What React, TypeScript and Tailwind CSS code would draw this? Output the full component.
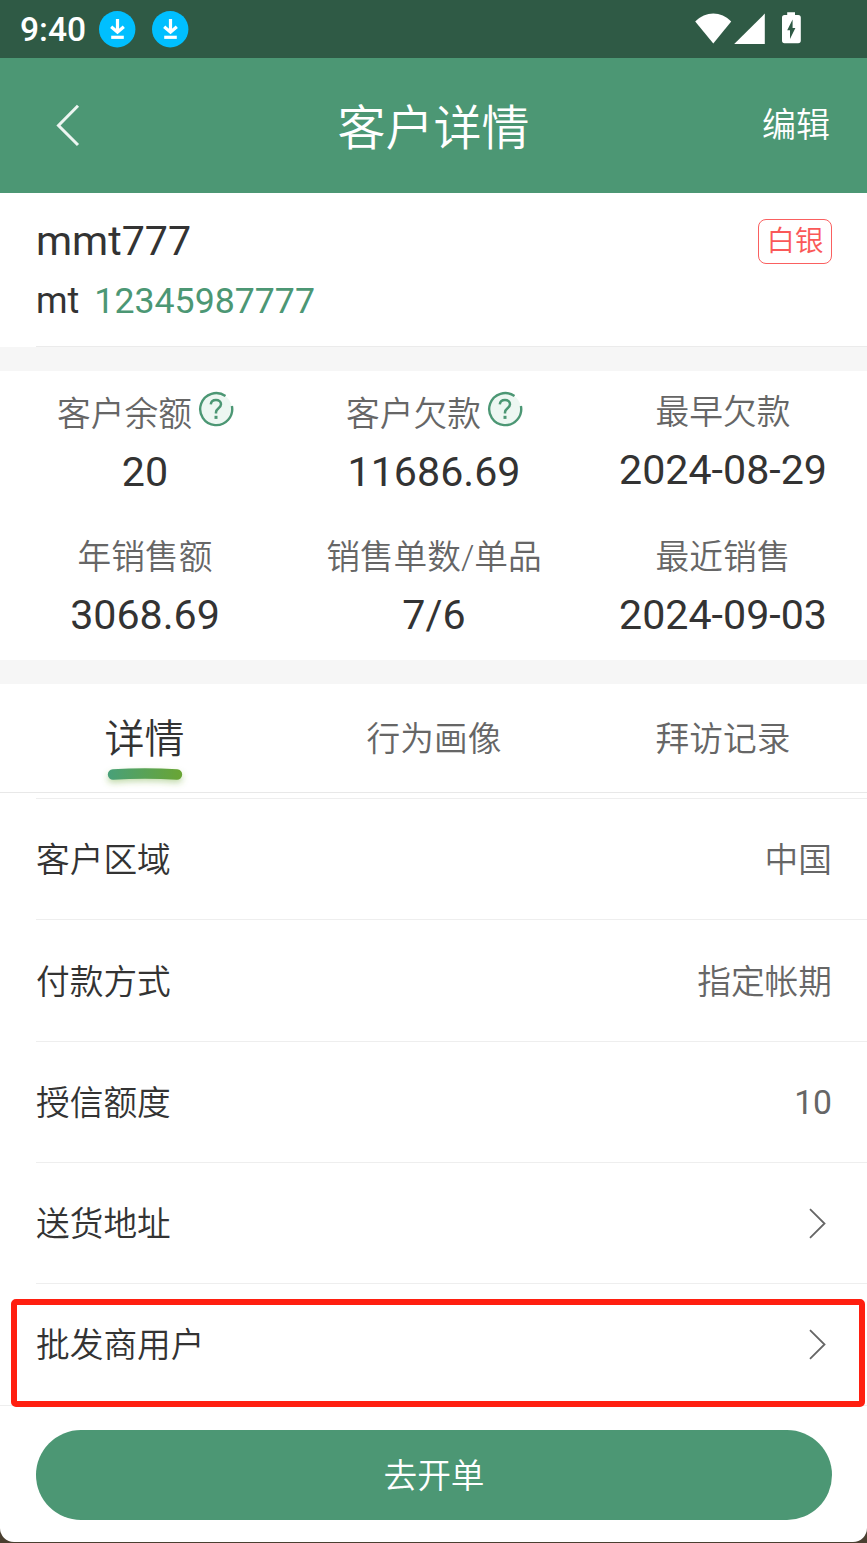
import { ReactNode } from "react"

interface Stat {
    label: string
    value: string
    help?: boolean
}

interface Row {
    label: string
    value?: string
}

const stats: Stat[] = [
    { label: "客户余额", value: "20", help: true },
    { label: "客户欠款", value: "11686.69", help: true },
    { label: "最早欠款", value: "2024-08-29" },
    { label: "年销售额", value: "3068.69" },
    { label: "销售单数/单品", value: "7/6" },
    { label: "最近销售", value: "2024-09-03" },
]

const rows: Row[] = [
    { label: "客户区域", value: "中国" },
    { label: "付款方式", value: "指定帐期" },
    { label: "授信额度", value: "10" },
    { label: "送货地址" },
    { label: "批发商用户" },
]

function DownloadIcon() {
    return (
        <svg width="37" height="37" viewBox="0 0 37 37" fill="none">
            <circle cx="18.2" cy="18.2" r="18.2" fill="#00bfff" />
            <path d="M18.5 8V20.5M12.2 15.7L18.5 21.2L24.8 15.7" stroke="#fff" strokeWidth="3.2" />
            <path d="M12.2 26.3H24.8" stroke="#fff" strokeWidth="3.2" />
        </svg>
    )
}

function HelpIcon() {
    return (
        <svg className="shrink-0" width="36" height="36" viewBox="0 0 36 36" fill="none">
            <circle cx="18" cy="18" r="16" fill="#edf7f2" />
            <path d="M27.5 5.1A16 16 0 1 0 33.9 15" stroke="#4c9774" strokeWidth="2.4" />
            <path
                d="M12.8 13.4C13 10.6 15.2 9 18 9C20.9 9 23 10.7 23 13.2C23 15.2 21.9 16.2 20.3 17.4C18.8 18.6 18 19.4 18 21.2V22.6"
                stroke="#4c9774"
                strokeWidth="2.5"
            />
            <path d="M18 24.8V27.9" stroke="#4c9774" strokeWidth="3" />
        </svg>
    )
}

function ChevronRight() {
    return (
        <svg width="24" height="32" viewBox="0 0 24 32" fill="none">
            <path d="M2 2.2L16.5 16.5L2 30.8" stroke="#666" strokeWidth="1.8" />
        </svg>
    )
}

function StatusBar() {
    return (
        <div className="flex h-[58px] items-center bg-[#2f5a45] pl-5 text-white">
            <span className="w-[79px] pt-0.5 text-[33.6px] leading-none font-medium">9:40</span>
            <div className="flex gap-4">
                <DownloadIcon />
                <DownloadIcon />
            </div>
            <svg className="mr-[65px] ml-auto" width="108" height="36" viewBox="0 0 108 36" fill="#fff">
                <path d="M1.2 10.6C11.5 -.1 27.2 -.1 37.2 10.6L19.3 32.5Z" />
                <path d="M70.8 2.6V33H40.2Z" />
                <path
                    fillRule="evenodd"
                    d="M93.2 1.2H101V4H104.2Q106.8 4 106.8 6.6V29.6Q106.8 32.2 104.2 32.2H90.5Q88 32.2 88 29.6V6.6Q88 4 90.5 4H93.2ZM98.6 8.6L93.2 19.3H96V28L101.4 17H98.6Z"
                />
            </svg>
        </div>
    )
}

function Header() {
    return (
        <header className="grid h-[135px] grid-cols-3 items-center bg-[#4c9774] text-white">
            <svg className="mb-0.5 ml-[55px]" width="26" height="44" viewBox="0 0 26 44" fill="none">
                <path d="M23 2.8L3.5 22.5L23 42" stroke="#edf5f1" strokeWidth="3" />
            </svg>
            <h1 className="pt-1.5 text-center text-[48px] leading-none font-[350]">客户详情</h1>
            <button type="button" className="pr-[37px] pb-px text-right text-[34px] leading-none font-[350]">编辑</button>
        </header>
    )
}

function Tab({ active, children }: { active?: boolean; children: ReactNode }) {
    return (
        <div className={active ? "relative flex items-center justify-center pt-1 text-[40px] font-[350] text-[#333]" : "flex items-center justify-center pt-1 pl-px text-[33.7px] font-[350] text-[#666]"}>
            <span>{children}</span>
            {active && (
                <svg className="absolute top-[76px] left-1/2 -translate-x-1/2" width="96" height="32" viewBox="0 0 96 32" fill="none">
                    <defs>
                        <linearGradient id="underline" x1="10" y1="0" x2="86" y2="0" gradientUnits="userSpaceOnUse">
                            <stop stopColor="#48a07a" />
                            <stop offset="1" stopColor="#6aa533" />
                        </linearGradient>
                        <filter id="glow" x="0" y="0" width="96" height="32" filterUnits="userSpaceOnUse">
                            <feGaussianBlur stdDeviation="3" />
                        </filter>
                    </defs>
                    <path d="M15.5 18Q48 15 80.5 18" stroke="#6aa533" strokeOpacity="0.4" strokeWidth="10" strokeLinecap="round" filter="url(#glow)" />
                    <path d="M16 14.5Q48 12.5 80 14.5" stroke="url(#underline)" strokeWidth="10.4" strokeLinecap="round" />
                </svg>
            )}
        </div>
    )
}

export default function App() {
    return (
        <div className="h-[1543px] w-[867px] overflow-hidden bg-[#4a3f30] font-['Roboto','Noto_Sans_CJK_SC',sans-serif]">
            <div className="flex h-[1542px] flex-col overflow-hidden rounded-b-[14px] bg-white">
                <StatusBar />
                <Header />

                <section className="flex h-[154px] justify-between pt-[25px] pl-9">
                    <div className="flex flex-1 flex-col border-b border-[#ebebeb]">
                        <div className="flex items-start justify-between pr-[35px]">
                            <h2 className="text-[41.2px] leading-[46px] text-[#333]">mmt777</h2>
                            <span className="mt-px flex h-[45px] w-[74px] items-center justify-center rounded-lg border border-[#fa6060] pt-0.5 text-[28.5px] leading-none font-[350] text-[#fa5858]">
                                白银
                            </span>
                        </div>
                        <p className="mt-[15px] flex gap-[15px] text-[36px] leading-[44px]">
                            <span className="text-[#333]">mt</span>
                            <span className="text-[35.7px] text-[#4c9774]">12345987777</span>
                        </p>
                    </div>
                </section>

                <div className="h-6 bg-[#f6f6f6]" />

                <section className="grid h-[289px] grid-cols-3 grid-rows-[145px_144px] text-center">
                    {stats.map((stat) => (
                        <div key={stat.label} className={stat.help ? "pt-[22px] pl-px" : "pt-5 pl-px"}>
                            <div className="flex h-[44px] items-center justify-center text-[33.7px] leading-[44px] text-[#666]">
                                <span className="font-[350]">{stat.label}</span>
                                {stat.help && (
                                    <span className="-mt-3 -mr-px ml-1.5">
                                        <HelpIcon />
                                    </span>
                                )}
                            </div>
                            <div className="mt-2.5 text-[41.2px] leading-[50px] text-[#333]">{stat.value}</div>
                        </div>
                    ))}
                </section>

                <div className="h-6 bg-[#f6f6f6]" />

                <nav className="grid h-[109px] shrink-0 grid-cols-3 border-b border-[#e8e8e8]">
                    <Tab active>详情</Tab>
                    <Tab>行为画像</Tab>
                    <Tab>拜访记录</Tab>
                </nav>

                <main className="relative h-[612px] shrink-0 pt-[5px] pl-9">
                    {rows.map((row) => (
                        <div key={row.label} className="flex h-[121.3px] items-center justify-between border-t border-[#eeeeee] pr-[35px] text-[33.7px] leading-none">
                            <span className="pt-1 font-[350] text-[#333]">{row.label}</span>
                            {row.value ? (
                                <span className={row.value === "10" ? "pt-0.5 text-[#666]" : "pt-1 font-[350] text-[#666]"}>{row.value}</span>
                            ) : (
                                <ChevronRight />
                            )}
                        </div>
                    ))}
                    <div className="absolute top-[506px] left-[11px] z-10 h-[108px] w-[854px] rounded-[5px] border-6 border-[#ff1f10]" />
                </main>

                <footer className="flex-1 border-t border-[#eeeeee] px-9 pt-6 pr-[35px]">
                    <button type="button" className="h-[90px] w-full rounded-full bg-[#4c9774] pt-1 text-[33.7px] leading-none font-[350] text-white">
                        去开单
                    </button>
                </footer>
            </div>
        </div>
    )
}
